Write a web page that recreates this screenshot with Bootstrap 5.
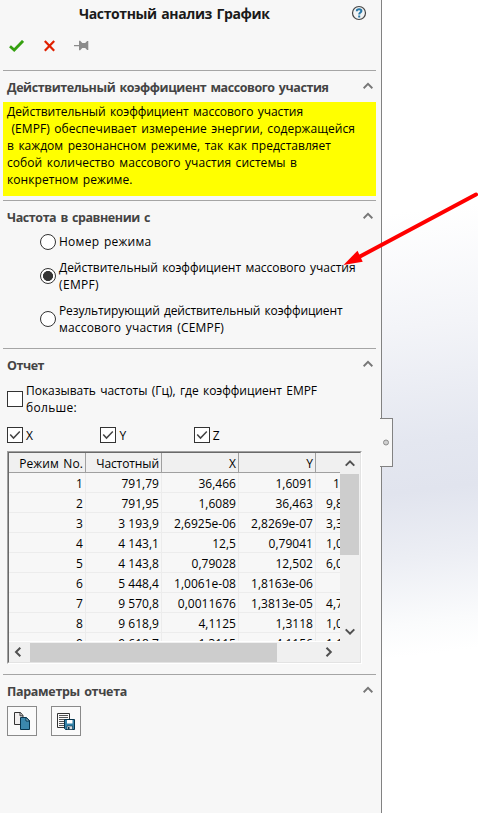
<!DOCTYPE html>
<html lang="ru">
<head>
<meta charset="utf-8">
<meta name="viewport" content="width=device-width, initial-scale=1">
<title>Частотный анализ График</title>
<link href="https://cdn.jsdelivr.net/npm/bootstrap@5.3.0/dist/css/bootstrap.min.css" rel="stylesheet">
<style>
body{font:12px/17px "Open Sans","Noto Sans",sans-serif;color:#000;width:478px;height:813px;overflow:hidden;position:relative}
svg{display:block;flex:none}
.panel{width:382px;height:813px;background:#f7f7f7;border-right:1px solid #828282;padding:0 5px 0 3px}
.viewport3d{background:linear-gradient(173deg,#fff 0,#fff 26%,#f3f4f8 40%,#e4e7f0 54%,#e1e4ee 60%,#eceef4 68%,#fafbfc 76%,#fff 80%)}
.title-row{height:32px;padding:0 9px 0 76px}
.title-text{font-size:14px;font-weight:700;color:#1a1a1a;line-height:28px}
.tools{height:38px;padding:8px 0 0 6px}
.pin{margin-left:13px}
.section{border-top:1px solid #a5a5a5}
.section-head{height:31px;padding:2px 3px 0 4px;color:#444;font-weight:700;font-size:12.5px}
.section-head svg{margin-bottom:3px}
.s-note{height:130px}.s-freq{height:148px}.s-report{height:326px}
.note{background:#ff0;height:94px;padding:1px 4px}
.ln{display:block;white-space:nowrap;width:max-content;word-spacing:1.3px}
.choice{gap:3px}
.form-check-input.rd,.form-check-input.cb{width:16px;height:16px;margin:0;float:none;border:1px solid #333;background-color:#fff;flex:none;box-shadow:none}
.form-check-input.cb{border-radius:0}
.form-check-input.rd:checked{background-image:radial-gradient(circle,#333 0 4.7px,transparent 5.3px)}
.form-check-input.cb:checked{background-image:none}
.tick{pointer-events:none;margin-left:-19px}
.radios{padding:1px 0 0 37px;gap:9px}
.freq-limit{margin-top:2px}
.axes{height:16px;margin-top:11px}
.axes .choice{width:93.4px}
.grid-box{width:355px;height:213px;margin:8px 0 0 4px;border:1px solid;border-color:#a0a0a0 #fff #fff #a0a0a0}
.grid-in{height:211px;border:1px solid;border-color:#696969 #e3e3e3 #e3e3e3 #696969;background:#f0f0f0}
.grid-view{width:331px;height:189px;overflow:hidden;background:#f7f7f7;border-bottom:1px solid #fff}
.grid-view table{table-layout:fixed;width:331px;border-collapse:separate;border-spacing:0}
.grid-view td,.grid-view th{height:20px;padding:2px 2px 0 0;line-height:17px;font-weight:400;text-align:right;border-right:1px solid #ececec;border-bottom:1px solid #ececec;white-space:nowrap;letter-spacing:.02px}
.grid-view th{background:#f0f0f0;border-color:#a0a0a0}
.grid-view td:last-child,.grid-view th:last-child{text-align:left;padding-left:10px;padding-right:0;border-right:0;overflow:hidden;text-overflow:clip}
.grid-view tr:first-child td:last-child{padding-left:17px}
.vbar{width:20px;height:189px;padding:6px 0}
.vthumb{width:19px;height:81px;background:#cdcdcd;margin-top:7px;margin-bottom:auto;align-self:flex-start}
.hbar{height:20px;padding-left:5px}
.hthumb{width:247px;height:19px;background:#cdcdcd;margin-left:8px}
.tool-btn{width:30px;height:30px;border:1px solid #8a8a8a;border-radius:0;background:#fafafa;padding:0}
.btn-line{gap:14px}
.handle{position:absolute;left:380px;top:418px;width:13px;height:49px;background:#f7f7f7;border:1px solid #828282;border-left:0}
.arrow{position:absolute;left:0;top:0;pointer-events:none}
</style>
</head>
<body>
<div class="d-flex h-100">
<aside class="panel flex-shrink-0">
  <div class="title-row d-flex align-items-start justify-content-between">
    <span class="ln title-text" data-w="190.5">Частотный анализ График</span>
    <svg class="mt-1" width="16" height="18" viewBox="0 0 16 18"><circle cx="8" cy="9" r="6.5" fill="#f2f4f5" stroke="#444" stroke-width="1.2"/><path d="M5.8 7.300V6.900C5.800 4.800 10.400 4.800 10.400 7c0 1.500-2.200 1.600-2.200 3.400M8.200 11.600v1.800" fill="none" stroke="#2878a8" stroke-width="2"/></svg>
  </div>
  <div class="tools d-flex">
    <svg width="15" height="12" viewBox="0 0 15 12"><path d="M1 6.200 5.200 10 14 .9" fill="none" stroke="#35a010" stroke-width="2.800"/></svg>
    <svg class="ms-3" width="20" height="12" viewBox="0 0 20 12"><path d="m4.800 1 9.400 9.800M14.200 1 4.800 10.800" fill="none" stroke="#e02000" stroke-width="2.200"/></svg>
    <svg class="pin" width="16" height="12" viewBox="0 0 16 12"><path d="M1 5h5V.8h1.200L9.300 3h2.900l1.900-2h1.200v9h-1.200l-1.900-2H9.300l-2.100 2.200H6V6.200H1z" fill="#8c8c8c"/></svg>
  </div>

  <section class="section s-note">
    <div class="section-head d-flex align-items-center justify-content-between"><span class="ln" data-w="321.5">Действительный коэффициент массового участия</span><svg width="10" height="8" viewBox="0 0 10 8"><path d="m.6 6.200L5 1.800l4.400 4.400" fill="none" stroke="#777" stroke-width="2"/></svg></div>
    <div class="note">
      <span class="ln" data-w="296">Действительный коэффициент массового участия</span>
      <span class="ln" data-w="348">&nbsp;(EMPF) обеспечивает измерение энергии, содержащейся</span>
      <span class="ln" data-w="324">в каждом резонансном режиме, так как представляет</span>
      <span class="ln" data-w="290">собой количество массового участия системы в</span>
      <span class="ln" data-w="125.5">конкретном режиме.</span>
    </div>
  </section>

  <section class="section s-freq">
    <div class="section-head d-flex align-items-center justify-content-between"><span class="ln" data-w="143">Частота в сравнении с</span><svg width="10" height="8" viewBox="0 0 10 8"><path d="m.6 6.200L5 1.800l4.400 4.400" fill="none" stroke="#777" stroke-width="2"/></svg></div>
    <div class="radios d-flex flex-column">
      <label class="choice d-flex align-items-center"><input class="form-check-input rd" type="radio" name="cmp"><span class="ln" data-w="92.5">Номер режима</span></label>
      <label class="choice d-flex align-items-center"><input class="form-check-input rd" type="radio" name="cmp" checked><span><span class="ln" data-w="296.5">Действительный коэффициент массового участия</span><span class="ln" data-w="40">(EMPF)</span></span></label>
      <label class="choice d-flex align-items-center"><input class="form-check-input rd" type="radio" name="cmp"><span><span class="ln" data-w="283.5">Результирующий действительный коэффициент</span><span class="ln" data-w="165">массового участия (CEMPF)</span></span></label>
    </div>
  </section>

  <section class="section s-report">
    <div class="section-head d-flex align-items-center justify-content-between"><span class="ln" data-w="37">Отчет</span><svg width="10" height="8" viewBox="0 0 10 8"><path d="m.6 6.200L5 1.800l4.400 4.400" fill="none" stroke="#777" stroke-width="2"/></svg></div>
    <label class="choice freq-limit d-flex align-items-center ms-1"><input class="form-check-input cb" type="checkbox"><span><span class="ln" data-w="291">Показывать частоты (Гц), где коэффициент EMPF</span><span class="ln" data-w="51">больше:</span></span></label>
    <div class="axes d-flex ms-1">
      <label class="choice d-flex align-items-center"><input class="form-check-input cb" type="checkbox" checked><svg class="tick" width="16" height="16" viewBox="0 0 16 16"><path d="m3.200 7.500 3.300 3.600L12.800 4.600" fill="none" stroke="#444" stroke-width="1.500"/></svg>X</label>
      <label class="choice d-flex align-items-center"><input class="form-check-input cb" type="checkbox" checked><svg class="tick" width="16" height="16" viewBox="0 0 16 16"><path d="m3.200 7.500 3.300 3.600L12.800 4.600" fill="none" stroke="#444" stroke-width="1.500"/></svg>Y</label>
      <label class="choice d-flex align-items-center"><input class="form-check-input cb" type="checkbox" checked><svg class="tick" width="16" height="16" viewBox="0 0 16 16"><path d="m3.200 7.500 3.300 3.600L12.800 4.600" fill="none" stroke="#444" stroke-width="1.500"/></svg>Z</label>
    </div>
    <div class="grid-box"><div class="grid-in">
      <div class="d-flex">
        <div class="grid-view flex-shrink-0">
          <table>
            <colgroup><col width="77"><col width="76"><col width="77"><col width="77"><col width="24"></colgroup>
            <thead><tr><th><span class="ln ms-auto" data-w="64">Режим No.</span></th><th><span class="ln ms-auto" data-w="63">Частотный</span></th><th>X</th><th>Y</th><th></th></tr></thead>
            <tbody>
              <tr><td>1</td><td>791,79</td><td>36,466</td><td>1,6091</td><td>1</td></tr>
              <tr><td>2</td><td>791,95</td><td>1,6089</td><td>36,463</td><td>9,8</td></tr>
              <tr><td>3</td><td>3 193,9</td><td>2,6925e-06</td><td>2,8269e-07</td><td>3,3</td></tr>
              <tr><td>4</td><td>4 143,1</td><td>12,5</td><td>0,79041</td><td>1,0</td></tr>
              <tr><td>5</td><td>4 143,8</td><td>0,79028</td><td>12,502</td><td>6,0</td></tr>
              <tr><td>6</td><td>5 448,4</td><td>1,0061e-08</td><td>1,8163e-06</td><td></td></tr>
              <tr><td>7</td><td>9 570,8</td><td>0,0011676</td><td>1,3813e-05</td><td>4,7</td></tr>
              <tr><td>8</td><td>9 618,9</td><td>4,1125</td><td>1,3118</td><td>1,0</td></tr>
              <tr><td>9</td><td>9 618,7</td><td>1,3115</td><td>4,1156</td><td>1,1</td></tr>
            </tbody>
          </table>
        </div>
        <div class="vbar d-flex flex-column align-items-center">
          <svg width="10" height="8" viewBox="0 0 10 8"><path d="m.7 6.600L5 2.300l4.300 4.300" fill="none" stroke="#505050" stroke-width="2"/></svg>
          <div class="vthumb"></div>
          <svg width="10" height="8" viewBox="0 0 10 8"><path d="M.7 1.400 5 5.700l4.300-4.300" fill="none" stroke="#505050" stroke-width="2"/></svg>
        </div>
      </div>
      <div class="hbar d-flex align-items-center">
        <svg width="8" height="10" viewBox="0 0 8 10"><path d="M6.300.7 2 5l4.300 4.300" fill="none" stroke="#505050" stroke-width="2"/></svg>
        <div class="hthumb"></div>
        <svg class="ms-5" width="8" height="10" viewBox="0 0 8 10"><path d="M1.500.7 5.800 5 1.500 9.300" fill="none" stroke="#505050" stroke-width="2"/></svg>
      </div>
    </div></div>
  </section>

  <section class="section">
    <div class="section-head d-flex align-items-center justify-content-between"><span class="ln" data-w="120">Параметры отчета</span><svg width="10" height="8" viewBox="0 0 10 8"><path d="m.6 6.200L5 1.800l4.400 4.400" fill="none" stroke="#777" stroke-width="2"/></svg></div>
    <div class="d-flex ms-1 btn-line">
      <button class="btn tool-btn d-flex align-items-center justify-content-center" type="button" aria-label="Копировать"><svg width="18" height="20" viewBox="0 0 18 20"><path d="M1.500 1.500h6l2.500 3v9h-8.500z" fill="#f1efef" stroke="#333"/><path d="M7 1.500v3.300h3" fill="none" stroke="#333"/><path d="M7.500 6.500h6l3 3v9h-9z" fill="#3b88ad" stroke="#07364f"/><path d="M13 6.500v3.500h3.500z" fill="#bcdcea" stroke="#07364f"/></svg></button>
      <button class="btn tool-btn d-flex align-items-center justify-content-center" type="button" aria-label="Сохранить"><svg width="20" height="20" viewBox="0 0 20 20"><path d="M1.500 2.500h12v14h-12z" fill="#fafafa" stroke="#333"/><path d="M3 4.500h9M3 6.500h9M3 8.500h9M3 10.500h6M3 12.500h5M3 14.500h5" stroke="#555"/><path d="M8.500 8.500h10v10h-9l-1-1z" fill="#3583aa" stroke="#06334b"/><path d="M11 9h5.500v3.500H11z" fill="#fff"/><path d="M11 15h5.500v3.500H11z" fill="#ddd" stroke="#06334b" stroke-width=".6"/><path d="M12 16h1.500v2.500H12z" fill="#06334b"/></svg></button>
    </div>
  </section>
</aside>
<main class="viewport3d flex-grow-1"></main>
</div>
<div class="handle"><svg width="12" height="47" viewBox="0 0 12 47"><circle cx="6" cy="23.500" r="2.500" fill="#d0d0d0" stroke="#8c8c8c"/></svg></div>
<svg class="arrow" width="478" height="813" viewBox="0 0 478 813"><path d="M476 194.500 359 257" stroke="#f00" stroke-width="4" stroke-linecap="round"/><path d="m343.500 265 14-14.300 5.200 11z" fill="#f00"/></svg>
<script src="https://cdn.jsdelivr.net/npm/bootstrap@5.3.0/dist/js/bootstrap.bundle.min.js"></script>
<script>
// Track each label line to its nominal width
document.querySelectorAll('.ln[data-w]').forEach(function(el){
  var w = el.getBoundingClientRect().width;
  el.style.letterSpacing = ((el.dataset.w - w) / el.textContent.length) + 'px';
});
</script>
</body>
</html>
